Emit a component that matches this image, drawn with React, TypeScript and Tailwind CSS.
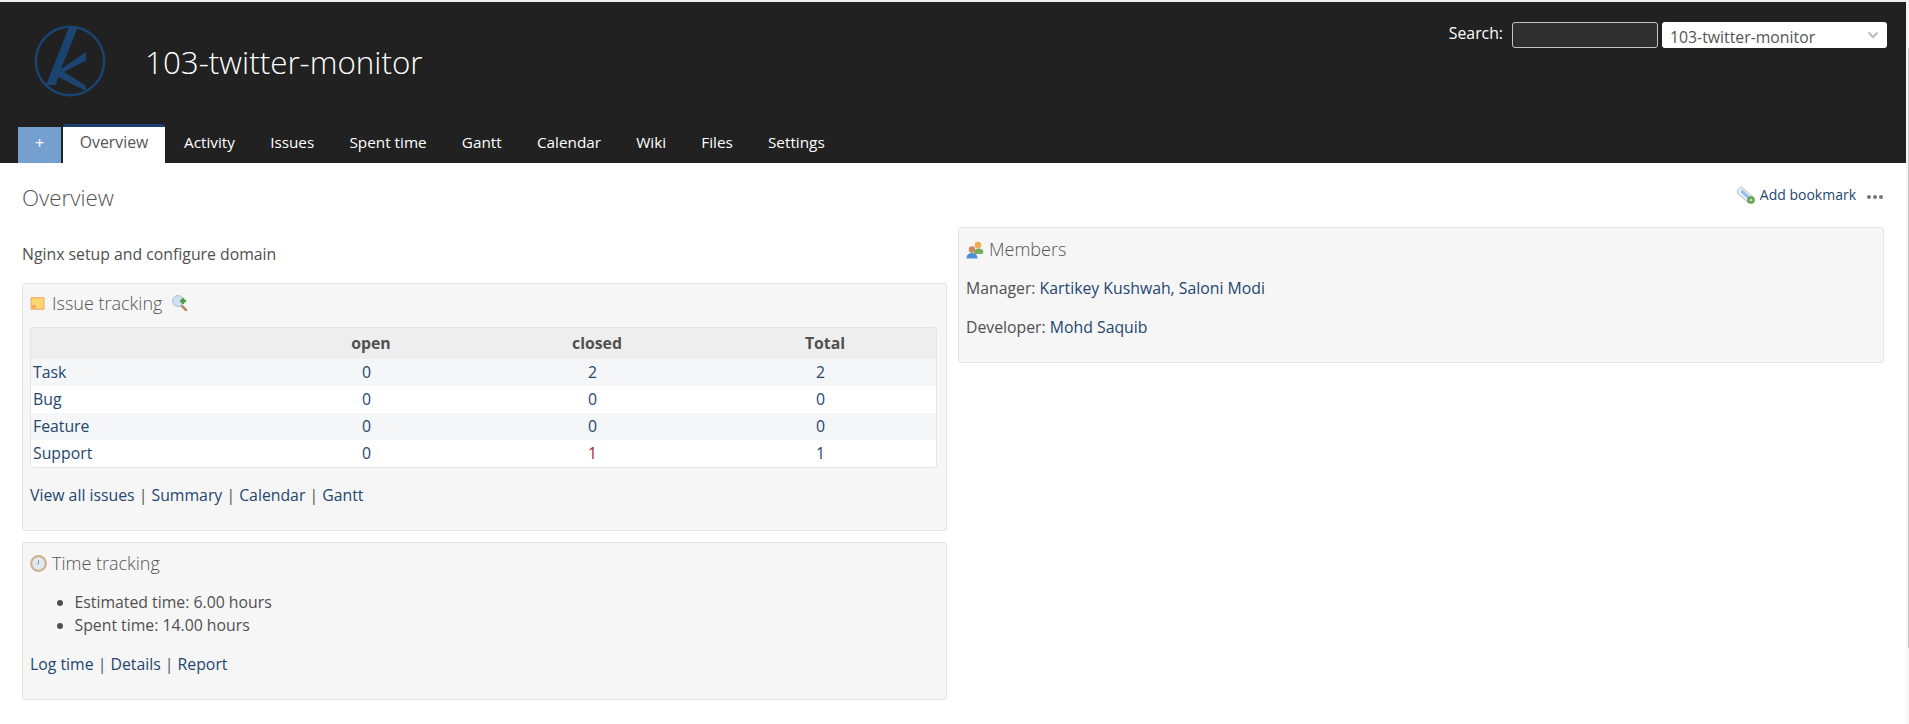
const projectTabs = [
  "Activity",
  "Issues",
  "Spent time",
  "Gantt",
  "Calendar",
  "Wiki",
  "Files",
  "Settings",
];

const issueRows = [
  { name: "Task", open: 0, closed: 2, total: 2 },
  { name: "Bug", open: 0, closed: 0, total: 0 },
  { name: "Feature", open: 0, closed: 0, total: 0 },
  { name: "Support", open: 0, closed: 1, total: 1, red: true },
];

const Logo = () => (
  <svg width="74" height="74" viewBox="0 0 74 74" className="shrink-0">
    <circle cx="37" cy="37" r="34.2" fill="none" stroke="#1b4470" strokeWidth="2.4" />
    <path d="M36 3 L45 3 L28 45 L53 28 L53 36.5 L31 48 L52 61 L53 67 L25 53 L23 61 L13 61 Z" fill="#1b4470" />
  </svg>
);

const NoteIcon = () => (
  <svg width="15" height="15" viewBox="0 0 15 15" className="shrink-0">
    <rect x="0.5" y="1" width="14" height="13" rx="1" fill="#f3b679" />
    <rect x="2" y="2.5" width="11" height="10" fill="#fbd96f" />
    <path d="M2 9 L6 9 L6 12.5 L2 12.5 Z" fill="#f2a766" />
  </svg>
);

const ZoomPlusIcon = () => (
  <svg width="16" height="16" viewBox="0 0 16 16" className="shrink-0">
    <path d="M9 10 L14 15" stroke="#b98a57" strokeWidth="2.5" strokeLinecap="round" />
    <circle cx="6" cy="6" r="5.5" fill="#cfe0f2" stroke="#a9c0da" />
    <path d="M11 3 V9 M8 6 H14" stroke="#4f9a42" strokeWidth="2.4" />
  </svg>
);

const ClockIcon = () => (
  <svg width="17" height="17" viewBox="0 0 17 17" className="shrink-0">
    <circle cx="8.5" cy="8.5" r="7.3" fill="#e3e9f1" stroke="#cdb28c" strokeWidth="2.2" />
    <path d="M8.5 5 V8.5 L6.5 9.5" fill="none" stroke="#8a97a6" strokeWidth="1" />
  </svg>
);

const MembersIcon = () => (
  <svg width="18" height="18" viewBox="0 0 18 18" className="shrink-0">
    <circle cx="12" cy="4" r="3.3" fill="#e9ad4f" />
    <path d="M8 12 C8 9 10 7.5 12 7.5 C15 7.5 17.5 9 17.5 11 L16 13 L9 13 Z" fill="#72ad5a" />
    <circle cx="6" cy="8.5" r="3.2" fill="#c98a62" />
    <path d="M0.5 17.5 C0.5 13.5 3 12 6 12 C9 12 11.5 13.5 11.5 17.5 Z" fill="#4f8fd8" />
  </svg>
);

const BookmarkIcon = () => (
  <svg width="18" height="18" viewBox="0 0 18 18" className="shrink-0">
    <path d="M0.5 4 L4 0.5 L16 11 L11 16.5 L0.5 7.5 Z" fill="#e4ebf2" stroke="#bcc0c4" />
    <path d="M4.5 5 L11.5 11.5" stroke="#8dbce8" strokeWidth="3" />
    <circle cx="14" cy="14" r="3.8" fill="#5f9f4a" />
    <circle cx="14" cy="14" r="1.6" fill="#b9e0a8" />
  </svg>
);

const Box = ({ className, children }: { className: string; children: React.ReactNode }) => (
  <div className={`rounded-[3px] border border-[#e4e4e4] bg-[#f6f6f6] ${className}`}>{children}</div>
);

const App = () => {
  return (
    <div className="flex h-[724px] overflow-hidden bg-white font-['Open_Sans',sans-serif] text-[15.8px] text-[#505050]">
      <div className="w-[1906px] shrink-0">
        <div className="h-[2px] bg-[#eeeeee]" />
        {/* Header */}
        <div className="h-[161px] bg-[#212121] flex flex-col justify-between">
          <div className="flex items-start justify-between pr-[19px]">
            <div className="flex items-center pl-[33px] pt-[22px] gap-[38px]">
              <Logo />
              <h1 className="mt-[2px] text-[31.4px] font-light leading-[42px] text-white">103-twitter-monitor</h1>
            </div>
            <div className="flex items-center pt-[20px] text-white">
              <span className="mr-[9px] mt-[-3px]">Search:</span>
              <input className="h-[26px] w-[146px] rounded-[3px] border border-[#c4c4c4] bg-[#2f2f2f]" />
              <div className="ml-[4px] flex h-[26px] w-[225px] items-center justify-between rounded-[3px] bg-white pl-[8px] pr-[8px] pt-[5px] text-[#555]">
                <span>103-twitter-monitor</span>
                <svg width="12" height="12" viewBox="0 0 12 12" className="mt-[-5px]">
                  <path d="M1.5 3.5 L6 8 L10.5 3.5" fill="none" stroke="#bbbbbb" strokeWidth="2" />
                </svg>
              </div>
            </div>
          </div>
          <div className="flex items-end pl-[18px] text-[15.3px] text-white">
            <div className="flex h-[36px] w-[43px] items-center justify-center bg-[#759fcf] pb-[4px] text-[16px]">+</div>
            <div className="ml-[2px] flex h-[39px] w-[102px] items-center justify-center rounded-t-[3px] border-t-[3px] border-[#1a406e] bg-white pb-[4px] text-[15.8px] text-[#555]">
              Overview
            </div>
            <div className="flex h-[36px] items-center pb-[6px] pl-[19px] gap-[35.2px]">
              {projectTabs.map((tab) => (
                <span key={tab}>{tab}</span>
              ))}
            </div>
          </div>
        </div>

        <div className="pl-[22px] pr-[21px]">
          {/* Title row */}
          <div className="flex items-start justify-between pt-[20px]">
            <h2 className="text-[22.3px] font-light leading-[30px] text-[#555]">Overview</h2>
            <div className="flex items-center pt-[2px] pr-[2px]">
              <BookmarkIcon />
              <span className="ml-[5px] text-[14px] leading-[20px] text-[#23466f]">Add bookmark</span>
              <div className="ml-[11px] mt-[3px] flex gap-[2px]">
                <div className="h-[4px] w-[4px] rounded-full bg-[#777]" />
                <div className="h-[4px] w-[4px] rounded-full bg-[#777]" />
                <div className="h-[4px] w-[4px] rounded-full bg-[#777]" />
              </div>
            </div>
          </div>

          <div className="grid grid-cols-[925px_926px] gap-[11px] pt-[14px]">
            {/* Left column */}
            <div className="flex flex-col">
              <p className="h-[56px] pt-[17px] leading-[20px]">Nginx setup and configure domain</p>
              <Box className="h-[248px] px-[7px]">
                <div className="flex h-[34px] items-center pt-[4px]">
                  <NoteIcon />
                  <span className="ml-[7px] text-[18px] font-light text-[#555]">Issue tracking</span>
                  <span className="ml-[10px]"><ZoomPlusIcon /></span>
                </div>
                <div className="mr-[2px] mt-[9px] overflow-hidden rounded-[3px] border border-[#e4e4e4] bg-white">
                  <table className="w-full table-fixed border-collapse">
                    <colgroup>
                      <col className="w-[231px]" />
                      <col className="w-[218px]" />
                      <col className="w-[234px]" />
                      <col />
                    </colgroup>
                    <thead>
                      <tr className="h-[31px] bg-[#eeeeee] font-bold">
                        <th />
                        <th>open</th>
                        <th>closed</th>
                        <th>Total</th>
                      </tr>
                    </thead>
                    <tbody className="text-[#23466f]">
                      {issueRows.map((row, i) => (
                        <tr key={row.name} className={`h-[27px] ${i % 2 === 0 ? "bg-[#f5f6f8]" : "bg-white"}`}>
                          <td className="pl-[2px]">{row.name}</td>
                          <td className="pr-[9px] text-center">{row.open}</td>
                          <td className={`pr-[9px] text-center ${row.red ? "text-[#9e2a2a]" : ""}`}>{row.closed}</td>
                          <td className="pr-[9px] text-center">{row.total}</td>
                        </tr>
                      ))}
                    </tbody>
                  </table>
                </div>
                <p className="mt-[17px] leading-[20px] text-[#23466f]">
                  View all issues <span className="text-[#505050]">|</span> Summary{" "}
                  <span className="text-[#505050]">|</span> Calendar <span className="text-[#505050]">|</span> Gantt
                </p>
              </Box>
              <Box className="mt-[11px] h-[158px] px-[7px]">
                <div className="flex h-[34px] items-center pt-[6px]">
                  <ClockIcon />
                  <span className="ml-[5px] text-[18px] font-light text-[#555]">Time tracking</span>
                </div>
                <ul className="mt-[14px] list-disc pl-[44.5px] leading-[23px]">
                  <li>Estimated time: 6.00 hours</li>
                  <li>Spent time: 14.00 hours</li>
                </ul>
                <p className="mt-[17px] leading-[20px] text-[#23466f]">
                  Log time <span className="text-[#505050]">|</span> Details <span className="text-[#505050]">|</span> Report
                </p>
              </Box>
            </div>

            {/* Right column */}
            <Box className="h-[136px] px-[7px]">
              <div className="flex h-[34px] items-center pt-[9px]">
                <MembersIcon />
                <span className="ml-[5px] text-[18px] font-light text-[#555]">Members</span>
              </div>
              <p className="mt-[16px] leading-[20px]">
                Manager: <span className="text-[#23466f]">Kartikey Kushwah, Saloni Modi</span>
              </p>
              <p className="mt-[19px] leading-[20px]">
                Developer: <span className="text-[#23466f]">Mohd Saquib</span>
              </p>
            </Box>
          </div>
        </div>
      </div>

      {/* Scrollbar sliver */}
      <div className="flex w-[3px] justify-end bg-[#f6f6f6] pt-[48px]">
        <div className="h-[600px] w-[1px] bg-[#c8c8c8]" />
      </div>
    </div>
  );
};

export default App;
